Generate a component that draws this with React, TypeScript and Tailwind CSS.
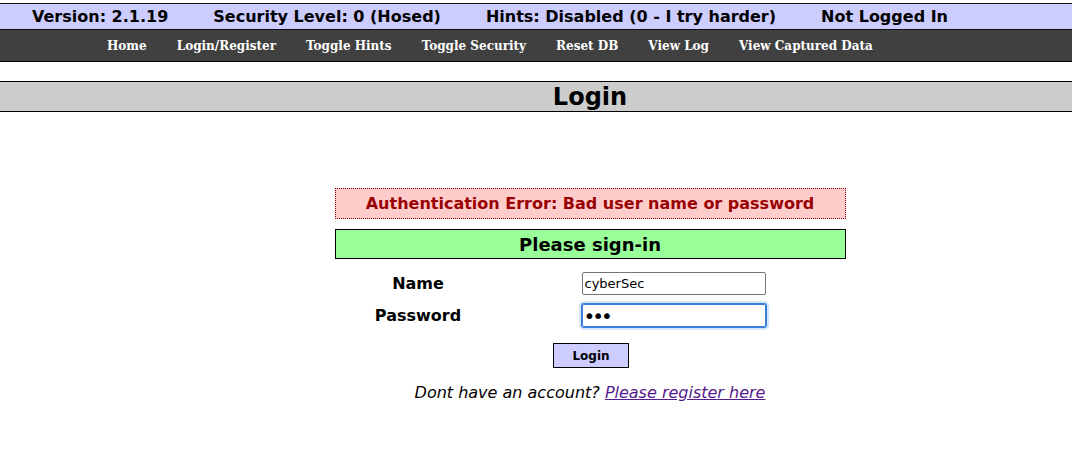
import React from 'react';

const statusItems = [
  'Version: 2.1.19',
  'Security Level: 0 (Hosed)',
  'Hints: Disabled (0 - I try harder)',
  'Not Logged In',
];

const navItems = ['Home', 'Login/Register', 'Toggle Hints', 'Toggle Security', 'Reset DB', 'View Log', 'View Captured Data'];

const App: React.FC = () => {
  return (
    <div className="min-h-screen bg-white font-['DejaVu_Sans',sans-serif] text-black">
      {/* Status bar */}
      <div className="mt-[3px] flex h-[27px] items-center gap-[45px] border-y border-[#111] bg-[#ccccff] pl-[32px] text-[16px] font-bold">
        {statusItems.map((s) => (
          <span key={s}>{s}</span>
        ))}
      </div>

      {/* Menu */}
      <nav className="flex h-[32px] items-center gap-[30px] border-b border-black bg-[#404040] pl-[107px] font-['DejaVu_Serif',serif] text-[12px] font-bold text-white">
        {navItems.map((n) => (
          <a key={n} href="#">{n}</a>
        ))}
      </nav>

      {/* Page title */}
      <div className="mt-[19px] flex h-[31px] items-center border-y border-black bg-[#cccccc] pl-[108px]">
        <h1 className="w-full text-center text-[24px] font-bold leading-none">Login</h1>
      </div>

      <div className="pl-[108px]">
        <div className="mx-auto w-[511px]">
          <div className="mt-[76px] flex h-[31px] items-center justify-center border border-dotted border-[#990000] bg-[#ffcccc] text-[16px] font-bold text-[#990000]">
            Authentication Error: Bad user name or password
          </div>

          <div className="mt-[10px] flex h-[30px] items-center justify-center border border-black bg-[#99ff99] text-[18px] font-bold">
            Please sign-in
          </div>

          <div className="mt-[13px] grid grid-cols-[167px_344px] gap-y-[8px]">
            <div className="flex items-center justify-center text-[16px] font-bold">Name</div>
            <div className="flex justify-center">
              <input
                type="text"
                defaultValue="cyberSec"
                className="h-[23px] w-[184px] rounded-[2px] border border-[#767676] px-[2px] font-['DejaVu_Sans',sans-serif] text-[13px] outline-none"
              />
            </div>
            <div className="flex items-center justify-center text-[16px] font-bold">Password</div>
            <div className="flex justify-center">
              <input
                type="password"
                defaultValue="abc"
                className="h-[23px] w-[184px] rounded-[2px] border border-[#3b7dd8] px-[1px] font-['DejaVu_Sans',sans-serif] text-[20px] leading-none tracking-[-3px] shadow-[0_0_0_1px_#3b7dd8,0_0_0_3px_#d3e5fb] outline-none"
              />
            </div>
          </div>

          <div className="mt-[15px] flex justify-center">
            <button className="ml-[2px] h-[25px] w-[76px] border border-black bg-[#ccccff] text-[12px] font-bold">Login</button>
          </div>

          <p className="mt-[13px] text-center text-[16px] italic">
            Dont have an account?{' '}
            <a href="#" className="text-[#551a8b] underline">
              Please register here
            </a>
          </p>
        </div>
      </div>
    </div>
  );
};

export default App;
